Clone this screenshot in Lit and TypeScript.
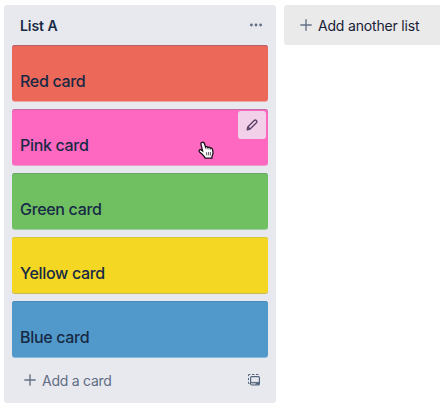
import { LitElement, html, css } from "lit";
import { customElement, property } from "lit/decorators.js";
import { classMap } from "lit/directives/class-map.js";

const plus = html`<svg class="plus" width="12" height="12" viewBox="0 0 12 12" fill="none" stroke="currentColor" stroke-width="1.4"><path d="M6 0.3V11.7M0.3 6H11.7"/></svg>`;

@customElement("board-card")
class BoardCard extends LitElement {
  @property() color = "red";
  @property() label = "";
  @property({ type: Boolean }) hovered = false;

  static styles = css`
    :host { display: block; }
    .card {
      position: relative; box-sizing: border-box; height: 56px;
      padding: 26px 8px 0; border-radius: 3px; color: #172945;
      font-size: 16px; line-height: 21px; font-weight: 500; letter-spacing: -0.32px;
    }
    .red { background: #ec6859; box-shadow: 0 1px 0 #eda8a5, inset 0 1px 0 #b5626a; }
    .pink { background: #ff68c1; box-shadow: 0 1px 0 #ee9bd2, inset 0 1px 0 #c86ca8; }
    .green { background: #70c062; box-shadow: 0 1px 0 #a0cda0, inset 0 1px 0 #68a868; }
    .yellow { background: #f4d722; box-shadow: 0 1px 0 #c9b750, inset 0 1px 0 #d9c53a; }
    .blue { background: #5199ca; box-shadow: 0 1px 0 #84b9de, inset 0 1px 0 #4b8bb8; }
    .edit {
      position: absolute; top: 2px; right: 2px; width: 28px; height: 28px;
      border-radius: 3px; background: #f3d0e9; color: #5c4369;
      display: grid; place-items: center;
    }
    .hand { position: absolute; left: 186px; top: 32px; }
  `;

  render() {
    return html`
      <div class=${classMap({ card: true, [this.color]: true })}>
        ${this.label}
        ${this.hovered ? html`
          <div class="edit">
            <svg width="12" height="12" viewBox="0 0 12 12" fill="none" stroke="currentColor" stroke-width="1.4" stroke-linejoin="round">
              <path d="M1.2 10.8L1.8 7.9L8.2 1.5Q9.2 0.6 10.4 1.6Q11.4 2.7 10.4 3.8L4.1 10.1Z M2 8L4 10"/>
            </svg>
          </div>
          <svg class="hand" width="17" height="19" viewBox="0 0 17 19">
            <path d="M4.2 1.3C5.4 1 6.2 1.8 6.5 2.8L7.5 5.9C8.2 5.4 9.4 5.6 9.8 6.4C10.7 5.9 11.8 6.2 12.2 7C13.5 6.7 14.3 7.5 14.6 8.8L15 11.3C15.2 13 14.5 14 14 15.2L13.9 17.1H7.1C6.7 15.5 5.3 14.5 4.3 13.3L1.5 10.9C.7 10.1 1.2 8.6 2.4 8.7C3.2 8.8 3.9 9.4 4.6 9.9L3 3.3C2.7 2.2 3 1.5 4.2 1.3Z" fill="#fff" stroke="#18101a" stroke-width="1.3"/>
            <path d="M7.5 6L8 8.2M9.9 6.6L10.2 8.4M12.2 7.2L12.4 8.7" fill="none" stroke="#18101a" stroke-width=".7"/>
            <path d="M8.5 11.2L8.8 14.4M10.5 11.1L10.7 14.4M12.4 11V14.4" fill="none" stroke="#18101a" stroke-width=".7"/>
          </svg>` : null}
      </div>`;
  }
}

@customElement("app-root")
class AppRoot extends LitElement {
  static styles = css`
    :host {
      display: block; height: 408px; overflow: hidden; background: #fff;
      font-family: Inter, "Liberation Sans", sans-serif; font-size: 14px; color: #172945;
    }
    .board { display: flex; align-items: flex-start; gap: 8px; padding: 5px 0 0 4px; }
    .list {
      flex: none; box-sizing: border-box; width: 272px; height: 398px; padding: 0 8px;
      border-radius: 3px; background: #e8e9ee;
    }
    .head { display: flex; align-items: center; justify-content: space-between; height: 40px; padding: 0 6px 0 8px; }
    .title { font-weight: 600; letter-spacing: -0.05px; }
    .cards { display: grid; gap: 8px; }
    .foot { display: flex; align-items: center; height: 46px; padding: 0 8px 0 12px; color: #5e6c84; letter-spacing: -0.25px; }
    .plus { flex: none; margin-right: 6px; color: #647286; }
    .template { margin-left: auto; }
    .another {
      flex: none; box-sizing: border-box; display: flex; align-items: center;
      width: 272px; height: 40px; padding-left: 16px; letter-spacing: -0.18px;
      border-radius: 3px; background: #eaeaea; color: #172036;
    }
  `;

  render() {
    return html`
      <div class="board">
        <section class="list">
          <div class="head">
            <span class="title">List A</span>
            <svg width="12" height="4" viewBox="0 0 12 4" fill="#5e6c84"><circle cx="1.4" cy="2" r="1.4"/><circle cx="6" cy="2" r="1.4"/><circle cx="10.6" cy="2" r="1.4"/></svg>
          </div>
          <div class="cards">
            <board-card color="red" label="Red card"></board-card>
            <board-card color="pink" label="Pink card" hovered></board-card>
            <board-card color="green" label="Green card"></board-card>
            <board-card color="yellow" label="Yellow card"></board-card>
            <board-card color="blue" label="Blue card"></board-card>
          </div>
          <div class="foot">
            ${plus}<span>Add a card</span>
            <svg class="template" width="12" height="12" viewBox="0 0 12 12" fill="none" stroke="#56657e">
              <path d="M0.5 2.2V0.5H2.4M4 0.5H6.5M8 0.5H10.4M0.5 4V6.2M0.5 7.8V9.5H1.6" stroke-width="1"/>
              <rect x="2.6" y="2.6" width="8.8" height="8.3" rx="1" stroke-width="1.2"/>
              <path d="M3 8.4H11" stroke-width="1"/>
              <path d="M3.2 9.7H7.6" stroke="#b4bac6" stroke-width="1.4"/>
              <path d="M7.6 9.7H11" stroke-width="1.6"/>
            </svg>
          </div>
        </section>
        <div class="another">${plus}<span>Add another list</span></div>
      </div>`;
  }
}
